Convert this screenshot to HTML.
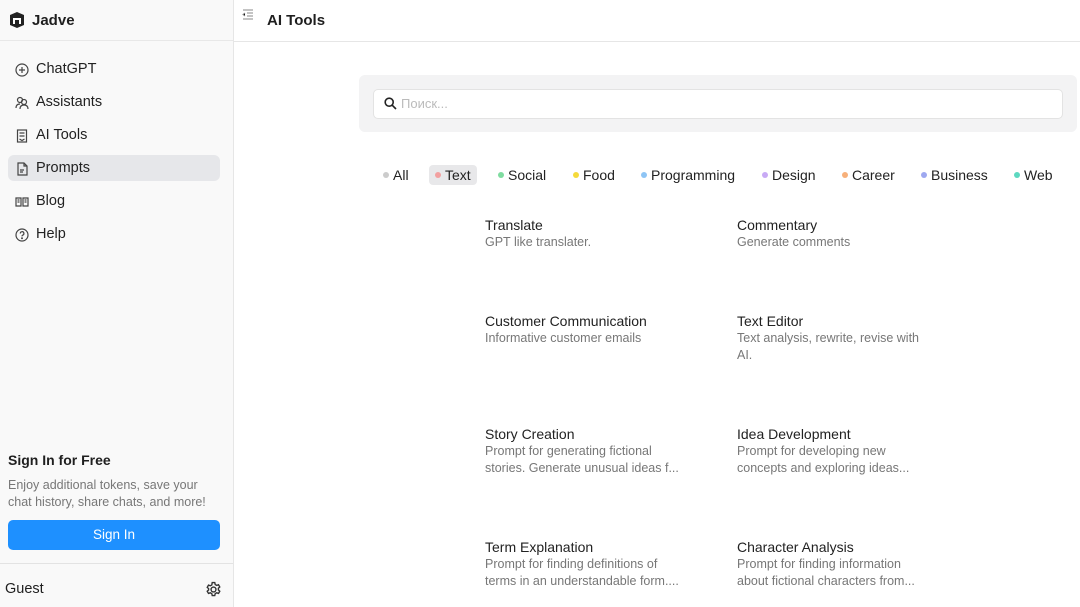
<!DOCTYPE html><html><head><meta charset="utf-8"><style>
*{margin:0;padding:0;box-sizing:border-box}
body{width:1080px;height:607px;overflow:hidden;font-family:"Liberation Sans",sans-serif;background:#fff;position:relative;color:#1f1f1f}
.sb{position:absolute;left:0;top:0;width:234px;height:607px;background:#f9f9f9;border-right:1px solid #e6e6e6}
.logo{height:41px;border-bottom:1px solid #e8e8e8;display:flex;align-items:center;padding-left:8px;font-weight:bold;font-size:15px}
.nav{position:absolute;left:8px;width:212px;height:26px;display:flex;align-items:center;padding-left:7px;font-size:14.5px;color:#222;border-radius:6px}
.nav svg{margin-right:7px;margin-top:1px}
.act{background:#e6e7ea}
.ab{position:absolute;font-size:13.5px}
.main{position:absolute;left:234px;top:0;right:0}
.hd{height:42px;border-bottom:1px solid #e6e6e6;display:flex;align-items:center;padding-left:33px;font-size:15px;font-weight:bold}
.sbox{position:absolute;left:359px;top:75px;width:718px;height:57px;background:#f3f3f4;border-radius:6px}
.inp{position:absolute;left:14px;top:14px;width:690px;height:30px;background:#fff;border:1px solid #e3e3e3;border-radius:5px;font-size:13px;color:#bbb;padding-left:27px;line-height:28px}
.tag{position:absolute;top:165px;height:20px;font-size:14px;line-height:20px;color:#222;padding:0 6px}
.tag i{display:inline-block;width:6px;height:6px;border-radius:50%;margin-right:4px;vertical-align:2px}
.card{position:absolute;width:200px}
.card b{display:block;font-weight:normal;font-size:14px;color:#222;line-height:18px}
.card p{font-size:12.5px;color:#777;line-height:16.5px;margin-top:0}
</style></head><body>
<div class="sb">
<div class="logo"><svg width="18" height="18" viewBox="0 0 18 18"><path d="M9 1L16 4V14L9 17L2 14V4Z" fill="#222"/><rect x="5" y="7" width="8" height="6" fill="#fff"/><rect x="7" y="9" width="4" height="4" fill="#222"/></svg><span style="margin-left:6px">Jadve</span></div>
<div class="nav" style="top:56px"><svg width="14" height="14" viewBox="0 0 14 14" fill="none" stroke="#444" stroke-width="1.2"><circle cx="7" cy="7" r="6"/><path d="M7 4v6M4 7h6"/></svg>ChatGPT</div>
<div class="nav" style="top:89px"><svg width="14" height="14" viewBox="0 0 14 14" fill="none" stroke="#444" stroke-width="1.2"><circle cx="5" cy="4" r="2.5"/><circle cx="9" cy="6" r="2.5"/><path d="M1 12c0-3 2-4 4-4M5 13c0-3 2-4 4-4s4 1 4 4"/></svg>Assistants</div>
<div class="nav" style="top:122px"><svg width="14" height="14" viewBox="0 0 14 14" fill="none" stroke="#444" stroke-width="1.2"><rect x="2.5" y="1" width="9" height="12"/><path d="M4.5 4h5M4.5 7h5M4.5 10l2.5 1.5 2.5-1.5"/></svg>AI Tools</div>
<div class="nav act" style="top:155px"><svg width="14" height="14" viewBox="0 0 14 14" fill="none" stroke="#444" stroke-width="1.2"><path d="M3 1h6l3 3v9H3z M9 1v3h3M5 8h4M5 10h3"/></svg>Prompts</div>
<div class="nav" style="top:188px"><svg width="14" height="14" viewBox="0 0 14 14" fill="none" stroke="#444" stroke-width="1.2"><path d="M1 3h5v8H1zM8 3h5v8H8zM2.5 5h2M2.5 7h2M9.5 5h2M9.5 7h2"/></svg>Blog</div>
<div class="nav" style="top:221px"><svg width="14" height="14" viewBox="0 0 14 14" fill="none" stroke="#444" stroke-width="1.2"><circle cx="7" cy="7" r="6"/><path d="M5.3 5.5a1.8 1.8 0 1 1 2.3 1.7c-.5.2-.6.5-.6 1.2"/><circle cx="7" cy="10.3" r=".4" fill="#444"/></svg>Help</div>
<div class="ab" style="left:8px;top:452px;font-weight:bold;font-size:14px">Sign In for Free</div>
<div class="ab" style="left:8px;top:477px;color:#777;font-size:12.5px;line-height:16.5px;width:205px">Enjoy additional tokens, save your chat history, share chats, and more!</div>
<div class="ab" style="left:8px;top:520px;width:212px;height:30px;background:#1e90ff;border-radius:5px;color:#fff;text-align:center;line-height:30px">Sign In</div>
<div style="position:absolute;left:0;top:563px;width:233px;border-top:1px solid #e3e3e3"></div>
<div class="ab" style="left:5px;top:581px;font-size:14.5px">Guest</div>
<svg style="position:absolute;left:205px;top:581px" width="17" height="17" viewBox="0 0 16 16" fill="none" stroke="#333" stroke-width="1.3"><circle cx="8" cy="8" r="2.3"/><path d="M6.8 1.5h2.4l.4 1.8 1.4.8 1.7-.6 1.2 2.1-1.3 1.2v1.6l1.3 1.2-1.2 2.1-1.7-.6-1.4.8-.4 1.8H6.8l-.4-1.8-1.4-.8-1.7.6-1.2-2.1 1.3-1.2V7.2L2.1 6l1.2-2.1 1.7.6 1.4-.8z"/></svg>
</div>
<div class="main"><div class="hd">AI Tools</div>
<svg style="position:absolute;left:8px;top:9px" width="12" height="11" viewBox="0 0 12 11" stroke="#888" stroke-width="1"><path d="M1 1h10M5 4h6M5 7h6M1 10h10M3 4L1 5.5 3 7"/></svg></div>
<div class="sbox"><div class="inp">Поиск...</div><svg style="position:absolute;left:25px;top:22px" width="13" height="13" viewBox="0 0 13 13" fill="none" stroke="#222" stroke-width="1.6"><circle cx="5.2" cy="5.2" r="4"/><path d="M8.2 8.2L12 12"/></svg></div>
<div class="tag" style="left:377px"><i style="background:#ccc"></i>All</div>
<div class="tag" style="left:429px;background:#e8e8ea;border-radius:4px"><i style="background:#f2a0a0"></i>Text</div>
<div class="tag" style="left:492px"><i style="background:#7fdca0"></i>Social</div>
<div class="tag" style="left:567px"><i style="background:#f5da3b"></i>Food</div>
<div class="tag" style="left:635px"><i style="background:#8ec5f5"></i>Programming</div>
<div class="tag" style="left:756px"><i style="background:#c8aaf5"></i>Design</div>
<div class="tag" style="left:836px"><i style="background:#f7b07a"></i>Career</div>
<div class="tag" style="left:915px"><i style="background:#9ea8f0"></i>Business</div>
<div class="tag" style="left:1008px"><i style="background:#5dd8c0"></i>Web</div>
<div class="card" style="left:485px;top:216px"><b>Translate</b><p>GPT like translater.</p></div>
<div class="card" style="left:737px;top:216px"><b>Commentary</b><p>Generate comments</p></div>
<div class="card" style="left:485px;top:312px"><b>Customer Communication</b><p>Informative customer emails</p></div>
<div class="card" style="left:737px;top:312px;width:190px"><b>Text Editor</b><p>Text analysis, rewrite, revise with AI.</p></div>
<div class="card" style="left:485px;top:425px"><b>Story Creation</b><p>Prompt for generating fictional stories. Generate unusual ideas f...</p></div>
<div class="card" style="left:737px;top:425px"><b>Idea Development</b><p>Prompt for developing new concepts and exploring ideas...</p></div>
<div class="card" style="left:485px;top:538px"><b>Term Explanation</b><p>Prompt for finding definitions of terms in an understandable form....</p></div>
<div class="card" style="left:737px;top:538px;width:185px"><b>Character Analysis</b><p>Prompt for finding information about fictional characters from...</p></div>
</body></html>
